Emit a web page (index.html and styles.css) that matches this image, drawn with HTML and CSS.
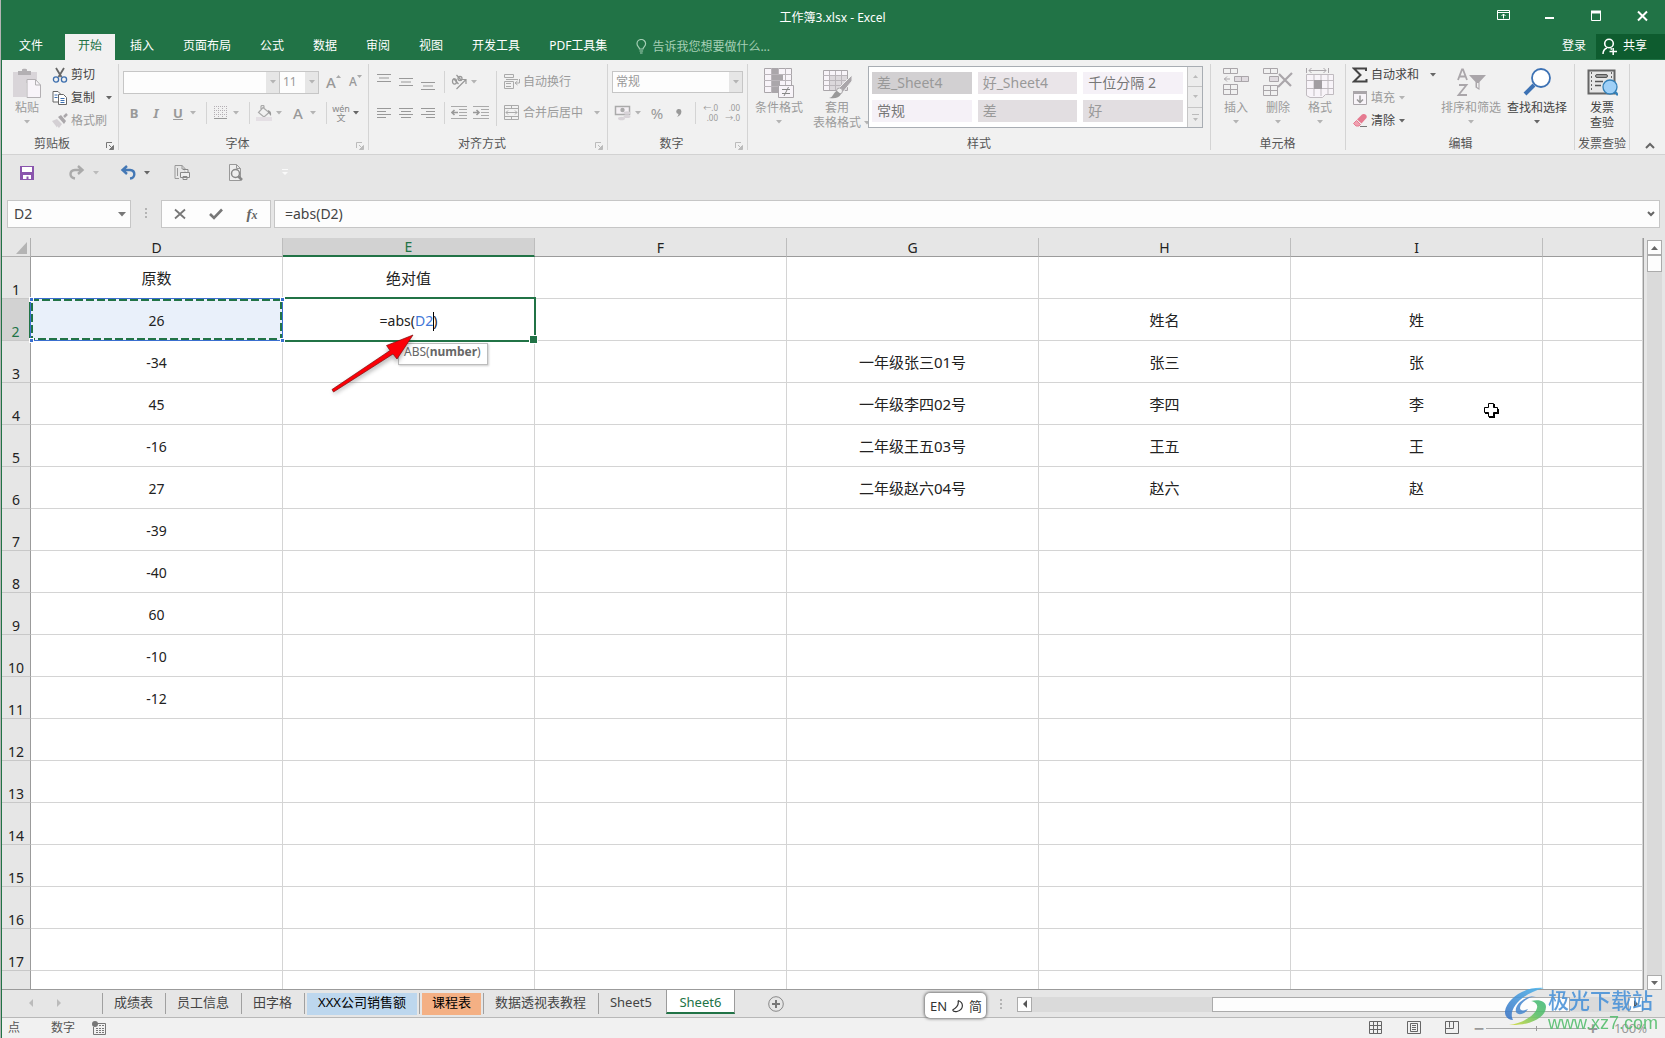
FILE: index.html
```html
<!DOCTYPE html>
<html lang="zh-CN">
<head>
<meta charset="utf-8">
<title>工作簿3.xlsx - Excel</title>
<link rel="stylesheet" href="styles.css">
</head>
<body>
<svg class="defs" aria-hidden="true">
  <symbol id="i-caret" viewBox="0 0 6 4"><path d="M0 0h6L3 3.4z" fill="currentColor"/></symbol>
  <symbol id="i-launch" viewBox="0 0 8 8"><path d="M.5 6V.5H6M3 3l3 3M7.500 3.500v4h-4z" fill="none" stroke="currentColor"/><path d="M7.500 3.500v4h-4z" fill="currentColor"/></symbol>
</svg>
<div class="app">
  <header class="titlebar">
    <h1 class="title">工作簿3.xlsx - Excel</h1>
    <div class="winbtns">
      <button aria-label="功能区显示选项"><svg width="14" height="12" viewBox="0 0 14 12"><path d="M.5.5h12v9H.5zM.5 2.500h12M6.500 8.500V4M4.500 6l2-2 2 2" fill="none" stroke="#fff"/></svg></button>
      <button aria-label="最小化"><svg width="10" height="12" viewBox="0 0 10 12"><path d="M0 8h9" stroke="#fff" stroke-width="2"/></svg></button>
      <button aria-label="最大化"><svg width="10" height="12" viewBox="0 0 10 12"><path d="M.5 1v9.500h9V1" fill="none" stroke="#fff"/><path d="M0 2h10" stroke="#fff" stroke-width="3"/></svg></button>
      <button aria-label="关闭"><svg width="11" height="12" viewBox="0 0 11 12"><path d="M1 1.500l9 9M10 1.500l-9 9" stroke="#fff" stroke-width="2"/></svg></button>
    </div>
  </header>
  <nav class="tabs">
    <button class="tab file">文件</button>
    <button class="tab active">开始</button>
    <button class="tab">插入</button>
    <button class="tab">页面布局</button>
    <button class="tab">公式</button>
    <button class="tab">数据</button>
    <button class="tab">审阅</button>
    <button class="tab">视图</button>
    <button class="tab">开发工具</button>
    <button class="tab">PDF工具集</button>
    <button class="tab tell"><svg width="11" height="15" viewBox="0 0 11 15"><path d="M3.500 10c0-2-2.500-2.500-2.500-5.200a4.300 4.300 0 0 1 8.600 0C9.600 7.500 7 8 7 10zM3.500 12h3.600M4 14h2.600" fill="none" stroke="#a5cfb5" stroke-width="1.200"/></svg>告诉我您想要做什么...</button>
    <button class="tab login">登录</button>
    <button class="tab share"><svg width="16" height="17" viewBox="0 0 16 17"><circle cx="7" cy="5.500" r="4.300" fill="none" stroke="#fff" stroke-width="1.600"/><path d="M1 16c0-3 1.500-5 4-6M8.500 10.500l1.500.8M7.500 13.500h7.500M11.200 10v7" fill="none" stroke="#fff" stroke-width="1.500"/></svg>共享</button>
  </nav>

  <div class="ribbon">
    <section class="group g-clip">
      <div class="body top">
        <button class="big off w50"><svg width="30" height="31" viewBox="0 0 30 31"><path d="M1 4h24v11H14v14H1z" fill="#d9d5d9"/><path d="M6 3h4V1.500C10 .5 15 .5 15 1.500V3h4v4H6z" fill="#b3b0b3"/><path d="M15 11.500h8.500L28.500 17v12.500H15z" fill="#f8f4f9" stroke="#b3b0b3"/><path d="M23.500 11.500V17h5" fill="none" stroke="#b3b0b3"/></svg><span>粘贴</span><svg class="caret"><use href="#i-caret"/></svg></button>
        <div class="stack">
          <button class="row"><svg width="16" height="16" viewBox="0 0 16 16"><path d="M4 1l5.500 9M12 1l-5.500 9" stroke="#666" stroke-width="1.800"/><circle cx="4" cy="12.500" r="2.600" fill="none" stroke="#3d6fae" stroke-width="1.300"/><circle cx="12" cy="12.500" r="2.600" fill="none" stroke="#3d6fae" stroke-width="1.300"/></svg>剪切</button>
          <button class="row"><svg width="16" height="16" viewBox="0 0 16 16"><path d="M1 1.500h5l2.500 2.500v8H1z" fill="#fff" stroke="#666"/><path d="M6.500 4.500h5L14.500 7.500v7h-8z" fill="#fff" stroke="#666"/><path d="M2.500 5h3M2.500 7.500h3M8.500 8.500h4M8.500 10.500h4M8.500 12.500h4" stroke="#3d6fae"/></svg>复制<svg class="caret far"><use href="#i-caret"/></svg></button>
          <button class="row off"><svg width="16" height="16" viewBox="0 0 16 16"><path d="M0 8l5-2 5 5-3 4-2-2v1.500z" fill="#d4d0d4"/><path d="M6 4l3-2 5 6-2 3z" fill="#aaa7aa"/><path d="M12 4l3-3" stroke="#aaa7aa" stroke-width="2.500"/></svg>格式刷</button>
        </div>
      </div>
      <footer><span>剪贴板</span><button class="launch dark" aria-label="剪贴板设置"><svg width="8" height="8"><use href="#i-launch"/></svg></button></footer>
    </section>

    <section class="group g-font">
      <div class="body rows">
        <div class="line">
          <div class="combo fontname"><input aria-label="字体名称"><button aria-label="展开字体"><svg class="caret"><use href="#i-caret"/></svg></button></div>
          <div class="combo fontsize"><input aria-label="字号" value="11"><button aria-label="展开字号"><svg class="caret"><use href="#i-caret"/></svg></button></div>
          <button class="ib grow" aria-label="增大字号"><span class="a15">A</span><svg width="5" height="3" viewBox="0 0 5 3"><path d="M0 3h5L2.500 0z" fill="#aaa"/></svg></button>
          <button class="ib grow" aria-label="减小字号"><span class="a12">A</span><svg width="5" height="3" viewBox="0 0 5 3"><path d="M0 0h5L2.500 3z" fill="#aaa"/></svg></button>
        </div>
        <div class="line">
          <button class="ib fmt"><b>B</b></button>
          <button class="ib fmt"><b class="it">I</b></button>
          <button class="ib split fmt"><b><u>U</u></b><svg class="caret"><use href="#i-caret"/></svg></button>
          <i class="vsep"></i>
          <button class="ib split" aria-label="边框"><svg width="14" height="14" viewBox="0 0 14 14"><path d="M.5 0v12M4.500 0v12M8.500 0v12M12.500 0v12M0 .5h13M0 4.500h13M0 8.500h13" stroke="#b5b0b5" stroke-dasharray="1 1"/><path d="M0 12.500h13" stroke="#999"/></svg><svg class="caret"><use href="#i-caret"/></svg></button>
          <i class="vsep"></i>
          <button class="ib split" aria-label="填充颜色"><svg width="16" height="16" viewBox="0 0 16 16"><path d="M7 2.500l6 5-5 4.500-5.500-4.500zM5 5V1.500c0-1.500 3-1.500 3 0V4" fill="none" stroke="#aaa" stroke-width="1.200"/><path d="M12 5c3 1 3.500 3 3 6-1.500-1-1.500-3-3-3z" fill="#999"/><path d="M0 12h16v4H0z" fill="#e4dfe4"/></svg><svg class="caret"><use href="#i-caret"/></svg></button>
          <button class="ib split" aria-label="字体颜色"><b class="a15">A</b><svg class="caret"><use href="#i-caret"/></svg></button>
          <i class="vsep"></i>
          <button class="ib split wen" aria-label="拼音指南"><span class="pinyin"><small>wén</small><small>文</small></span><svg class="caret dk"><use href="#i-caret"/></svg></button>
        </div>
      </div>
      <footer><span>字体</span><button class="launch" aria-label="字体设置"><svg width="8" height="8"><use href="#i-launch"/></svg></button></footer>
    </section>

    <section class="group g-align">
      <div class="body">
        <div class="rows aligns">
          <div class="line">
            <button class="ib" aria-label="顶端对齐"><svg width="14" height="16" viewBox="0 0 14 16"><path d="M0 .5h14M2 4h10M0 7.500h14" stroke="#999"/></svg></button>
            <button class="ib" aria-label="垂直居中"><svg width="14" height="16" viewBox="0 0 14 16"><path d="M0 4.500h14M2 8h10M0 11.500h14" stroke="#999"/></svg></button>
            <button class="ib" aria-label="底端对齐"><svg width="14" height="16" viewBox="0 0 14 16"><path d="M0 8.500h14M2 12h10M0 15.500h14" stroke="#999"/></svg></button>
            <i class="vsep"></i>
            <button class="ib split" aria-label="方向"><svg width="17" height="16" viewBox="0 0 17 16"><path d="M6 15L15 6M11 5.500h4.500V10" fill="none" stroke="#999" stroke-width="1.200"/><ellipse cx="4" cy="7.500" rx="2" ry="2.600" fill="none" stroke="#999" stroke-width="1.300"/><path d="M3 4.500L8 10M6 1l5 5.500" stroke="#999" stroke-width="1.300"/><circle cx="9.500" cy="4.500" r="2" fill="none" stroke="#999" stroke-width="1.300"/></svg><svg class="caret"><use href="#i-caret"/></svg></button>
          </div>
          <div class="line">
            <button class="ib" aria-label="左对齐"><svg width="14" height="11" viewBox="0 0 14 11"><path d="M0 .5h14M0 3.500h9M0 6.500h14M0 9.500h9" stroke="#999"/></svg></button>
            <button class="ib" aria-label="居中"><svg width="14" height="11" viewBox="0 0 14 11"><path d="M0 .5h14M2 3.500h10M0 6.500h14M2 9.500h10" stroke="#999"/></svg></button>
            <button class="ib" aria-label="右对齐"><svg width="14" height="11" viewBox="0 0 14 11"><path d="M0 .5h14M5 3.500h9M0 6.500h14M5 9.500h9" stroke="#999"/></svg></button>
            <i class="vsep"></i>
            <button class="ib" aria-label="减少缩进"><svg width="16" height="14" viewBox="0 0 16 14"><path d="M0 .5h16M8 3.500h8M8 6.500h8M8 9.500h8M0 12.500h16" stroke="#aaa"/><path d="M1 6.500h6M3.500 4L1 6.500 3.500 9" fill="none" stroke="#999" stroke-width="1.600"/></svg></button>
            <button class="ib" aria-label="增加缩进"><svg width="16" height="14" viewBox="0 0 16 14"><path d="M0 .5h16M8 3.500h8M8 6.500h8M8 9.500h8M0 12.500h16" stroke="#aaa"/><path d="M0 6.500h6M3.500 4L6 6.500 3.500 9" fill="none" stroke="#999" stroke-width="1.600"/></svg></button>
          </div>
        </div>
        <i class="vsep tall"></i>
        <div class="rows">
          <button class="row off"><svg width="16" height="16" viewBox="0 0 16 16"><path d="M.5.5h9v3h-9zM.5 7.500h9v7h-9zM2 9.500h5M2 12.500h5M2 5.500h12M15.500 5v4h-4M13.500 7l-2.500 2 2.500 2" fill="none" stroke="#aaa"/></svg>自动换行</button>
          <button class="row off"><svg width="16" height="16" viewBox="0 0 16 16"><path d="M.5.5h14v14H.5zM.5 3.500h14M.5 11.500h14M7.500 .5v3M7.500 11.500v3M2 7.500h11M4 5.500l-2 2 2 2M11 5.500l2 2-2 2" fill="none" stroke="#aaa"/></svg>合并后居中<svg class="caret far"><use href="#i-caret"/></svg></button>
        </div>
      </div>
      <footer><span>对齐方式</span><button class="launch" aria-label="对齐设置"><svg width="8" height="8"><use href="#i-launch"/></svg></button></footer>
    </section>

    <section class="group g-num">
      <div class="body rows">
        <div class="combo numfmt"><select aria-label="数字格式"><option>常规</option></select><span class="drop"><svg class="caret"><use href="#i-caret"/></svg></span></div>
        <div class="line">
          <button class="ib split" aria-label="会计数字格式"><svg width="17" height="16" viewBox="0 0 17 16"><path d="M1 1.500h14v8H1z" fill="#f4f0f4" stroke="#aaa" stroke-width="1.500"/><circle cx="8" cy="5" r="2.200" fill="#aaa"/><ellipse cx="12.500" cy="8" rx="3.500" ry="1.800" fill="#d8d3d8"/><ellipse cx="12.500" cy="11.500" rx="3.500" ry="1.600" fill="#d8d3d8"/><ellipse cx="7" cy="13.500" rx="3.500" ry="1.800" fill="#d8d3d8"/></svg><svg class="caret"><use href="#i-caret"/></svg></button>
          <button class="ib pct">%</button>
          <button class="ib" aria-label="千位分隔样式"><svg width="6" height="9" viewBox="0 0 6 9"><path d="M3 0a2.400 2.400 0 0 1 2.400 2.500C5.400 5 4 7 1 8c1-1 1.500-2 1.500-3A2.500 2.500 0 0 1 3 0z" fill="#999"/></svg></button>
          <i class="vsep"></i>
          <button class="ib dec" aria-label="增加小数位数"><span>←.0</span><span>.00</span></button>
          <button class="ib dec" aria-label="减少小数位数"><span>.00</span><span>→.0</span></button>
        </div>
      </div>
      <footer><span>数字</span><button class="launch" aria-label="数字设置"><svg width="8" height="8"><use href="#i-launch"/></svg></button></footer>
    </section>

    <section class="group g-style">
      <div class="body top">
        <button class="big off w58"><svg width="31" height="31" viewBox="0 0 31 31"><path d="M.5.5h27v24H.5z" fill="#f8f4f9" stroke="#aaa6aa"/><path d="M8 0h6v24H8zM8 6h11v6H8zM8 12h8v6H8z" fill="#aaa6aa"/><path d="M0 6.500h28M0 12.500h28M0 18.500h28M7.500 0v25M14.500 0v6M21.500 0v25" stroke="#bbb6bb"/><path d="M14.500 17.500h15v12h-15z" fill="#f8f4f9" stroke="#aaa6aa"/><path d="M18 21.500h8M18 25.500h8M24.500 19l-4.500 9" stroke="#888"/></svg><span>条件格式</span><svg class="caret"><use href="#i-caret"/></svg></button>
        <button class="big off w58"><svg width="31" height="31" viewBox="0 0 31 31"><path d="M1.500 2.500h24v20h-24z" fill="#f8f4f9" stroke="#aaa6aa"/><path d="M7 8h18v14H7z" fill="#dcd8dc"/><path d="M1 7.500h24M1 12.500h24M1 17.500h24M7.500 3v19M13.500 3v19M19.500 3v19" stroke="#bbb6bb"/><path d="M30 7L17 20l4 4 9-11z" fill="#aaa6aa" stroke="#f0f0f0"/><circle cx="17.500" cy="23" r="3" fill="#f0f0f0" stroke="#aaa6aa"/><path d="M7 30c5-1 4-6 8-7l4 3c-2 4-6 5-12 4z" fill="#999"/></svg><span>套用</span><span class="with">表格格式<svg class="caret"><use href="#i-caret"/></svg></span></button>
        <div class="gallery">
          <div class="swatches">
            <button class="sw s1">差_Sheet4</button><button class="sw s2">好_Sheet4</button><button class="sw s3">千位分隔 2</button>
            <button class="sw s4">常规</button><button class="sw s5">差</button><button class="sw s6">好</button>
          </div>
          <div class="gscroll">
            <button aria-label="上一行"><svg width="5" height="3" viewBox="0 0 5 3"><path d="M0 3h5L2.500 0z" fill="#bbb"/></svg></button>
            <button aria-label="下一行"><svg width="5" height="3" viewBox="0 0 5 3"><path d="M0 0h5L2.500 3z" fill="#bbb"/></svg></button>
            <button aria-label="更多样式"><svg width="7" height="7" viewBox="0 0 7 7"><path d="M0 0h7v1H0zM1 4h5L3.500 7z" fill="#bbb"/></svg></button>
          </div>
        </div>
      </div>
      <footer><span>样式</span></footer>
    </section>

    <section class="group g-cell">
      <div class="body top">
        <button class="big off w42"><svg width="27" height="31" viewBox="0 0 27 31"><path d="M.5.5h14v5H.5zM7.500.5v5M.5 16.500h14v10H.5zM7.500 16.500v10M.5 21.500h14M1 11h6M4 8.500L1.500 11 4 13.500" fill="none" stroke="#aaa6aa"/><path d="M11.500 8.500h14v5h-14zM18.500 8.500v5" fill="#e0dbe0" stroke="#aaa6aa"/></svg><span>插入</span><svg class="caret"><use href="#i-caret"/></svg></button>
        <button class="big off w42"><svg width="30" height="31" viewBox="0 0 30 31"><path d="M.5.5h14v5H.5zM7.500.5v5M.5 17.500h14v10H.5zM7.500 17.500v10M.5 22.500h14" fill="none" stroke="#aaa6aa"/><path d="M6.500 8.500h9v5h-9z" fill="#e0dbe0" stroke="#aaa6aa"/><path d="M16 6l12 12M29 5L15 19" stroke="#aaa6aa" stroke-width="2.200"/></svg><span>删除</span><svg class="caret"><use href="#i-caret"/></svg></button>
        <button class="big off w42"><svg width="29" height="31" viewBox="0 -1 29 31"><path d="M.5 5.500h27v20h-8l-3 3H4l-3.500-2z" fill="#f8f4f9" stroke="#c0bbc0"/><path d="M8 5v22M15 5v22M22 5v21M1 11.500h26M1 19.500h26" stroke="#c0bbc0"/><path d="M8 11h8v9H8z" fill="#a29ea2"/><path d="M.5-1v5M22.500-1v5M3 1.500h17M5.500-1L3 1.500 5.500 4M17.500-1L20 1.500 17.500 4" fill="none" stroke="#aaa6aa"/></svg><span>格式</span><svg class="caret"><use href="#i-caret"/></svg></button>
      </div>
      <footer><span>单元格</span></footer>
    </section>

    <section class="group g-edit">
      <div class="body top">
        <div class="stack">
          <button class="row"><svg width="16" height="16" viewBox="0 0 16 16"><path d="M14 4V1.500H2L8.500 8 2 14.500h12.500V12" fill="none" stroke="#444" stroke-width="2"/></svg>自动求和<svg class="caret far"><use href="#i-caret"/></svg></button>
          <button class="row off"><svg width="16" height="16" viewBox="0 0 16 16"><path d="M1.500 1.500h13v13h-13z" fill="#f8f4f9" stroke="#aaa6aa"/><path d="M1 1h14v3H1z" fill="#aaa6aa"/><path d="M8 5.500v7M5 9.500l3 3 3-3" fill="none" stroke="#999" stroke-width="1.500"/></svg>填充<svg class="caret"><use href="#i-caret"/></svg></button>
          <button class="row"><svg width="16" height="16" viewBox="0 0 16 16"><path d="M5 6.500l5-5c1-1 3-.5 4 .5s1 2.500 0 3.500l-4.500 5z" fill="#e57a90"/><path d="M4.500 7.500l4 4-1.500 1.500H4l-2.500-2.500z" fill="#f0a0b0" stroke="#e57a90"/><path d="M8 13.500h7" stroke="#777"/></svg>清除<svg class="caret"><use href="#i-caret"/></svg></button>
        </div>
        <button class="big off sortbtn"><svg width="31" height="31" viewBox="0 0 31 31"><path d="M2 12L6 1.500h1L11 12M3.500 8.500h6M3 17h7.500L2.500 27H11" fill="none" stroke="#aaa6aa" stroke-width="1.800"/><path d="M13 7h17l-6.500 7v8l-4-2.500V14z" fill="#aaa6aa"/><path d="M21 15h1.500v5L21 19z" fill="#f0f0f0"/></svg><span>排序和筛选</span><svg class="caret"><use href="#i-caret"/></svg></button>
        <button class="big w66"><svg width="31" height="31" viewBox="0 0 31 31"><path d="M3 26l9-9" stroke="#3d72b4" stroke-width="4"/><circle cx="19" cy="10" r="9" fill="#fff" stroke="#3d72b4" stroke-width="1.800"/></svg><span>查找和选择</span><svg class="caret"><use href="#i-caret"/></svg></button>
      </div>
      <footer><span>编辑</span></footer>
    </section>

    <section class="group g-inv">
      <div class="body top">
        <button class="big w54"><svg width="31" height="31" viewBox="0 0 31 31"><path d="M1.500 2.500h26v23h-26z" fill="#e6e6e6" stroke="#666" stroke-width="2"/><path d="M4.500 4v20M24.500 4v9" stroke="#666" stroke-dasharray="2 2"/><rect x="8.500" y="6.500" width="12" height="3" rx="1.500" fill="#999" stroke="#555"/><path d="M8 13.500h8M8 17.500h6" stroke="#555" stroke-width="1.300"/><path d="M27 23l4 4" stroke="#3480b8" stroke-width="2.500"/><circle cx="23" cy="19" r="7" fill="#9fd0f7" stroke="#3480b8" stroke-width="1.300"/></svg><span>发票</span><span>查验</span></button>
      </div>
      <footer><span>发票查验</span></footer>
    </section>
    <button class="collapse" aria-label="折叠功能区"><svg width="10" height="7" viewBox="0 0 10 7"><path d="M1 6l4-4 4 4" fill="none" stroke="#666" stroke-width="2"/></svg></button>
  </div>

  <div class="qat">
    <button aria-label="保存"><svg width="16" height="16" viewBox="0 0 16 16"><path d="M1 1h14v14H1z" fill="#8a55ad"/><path d="M3 2h10v5H3zM4 10h8v4H9.500v-2.500h-2V14H4z" fill="#fff"/></svg></button>
    <button class="mid" aria-label="恢复"><svg width="16" height="16" viewBox="0 0 16 16"><path d="M13 5H6C0 5.500 0 12.500 6 13.500M9 1l4.500 4L9 9" fill="none" stroke="#aaa" stroke-width="2.400"/></svg><svg class="caret"><use href="#i-caret"/></svg></button>
    <button class="mid undo" aria-label="撤消"><svg width="16" height="16" viewBox="0 0 16 16"><path d="M3 5h7c6 .5 5.500 8 0 8.500M7 1L2.500 5 7 9" fill="none" stroke="#4478b5" stroke-width="2.400"/></svg><svg class="caret dk"><use href="#i-caret"/></svg></button>
    <button class="print" aria-label="快速打印"><svg width="17" height="17" viewBox="0 0 17 17"><path d="M1 1.500h7l3 3v3M1 1.500v13h4M3.500 4v8M8 1v4h3" fill="none" stroke="#999"/><path d="M6.500 8.500h9v5h-9zM9 5.500h5v3M9 12.500h4v3H9z" fill="#eee" stroke="#888"/></svg></button>
    <button class="prev" aria-label="打印预览"><svg width="16" height="17" viewBox="0 0 16 17"><path d="M1.500.5h7l4 4v12h-11zM8.500.5v4h4" fill="#eee" stroke="#999"/><circle cx="7.500" cy="9.500" r="4" fill="#eee" stroke="#888" stroke-width="1.500"/><path d="M10 12l4 4" stroke="#888" stroke-width="2.500"/></svg></button>
    <button aria-label="自定义快速访问工具栏"><svg width="6" height="7" viewBox="0 0 6 7"><path d="M0 0h6v1H0zM0 3h6L3 6z" fill="#fafafa"/></svg></button>
  </div>

  <div class="fbar">
    <div class="namebox"><input aria-label="名称框" value="D2"><button aria-label="展开名称框"><svg width="8" height="5" viewBox="0 0 8 5"><path d="M0 0h8L4 4.500z" fill="#777"/></svg></button></div>
    <span class="grip"></span>
    <div class="fbtns">
      <button aria-label="取消"><svg width="12" height="12" viewBox="0 0 12 12"><path d="M1 1.500l10 9M11 1.500l-10 9" stroke="#777" stroke-width="1.800"/></svg></button>
      <button aria-label="输入"><svg width="14" height="12" viewBox="0 0 14 12"><path d="M1 6l4 4 8-8.500" fill="none" stroke="#777" stroke-width="2.600"/></svg></button>
      <button class="fx" aria-label="插入函数"><i>f<small>x</small></i></button>
    </div>
    <div class="formula"><input aria-label="编辑栏" value="=abs(D2)"><button aria-label="展开编辑栏"><svg width="8" height="6" viewBox="0 0 8 6"><path d="M1 1l3 3 3-3" fill="none" stroke="#666" stroke-width="2"/></svg></button></div>
  </div>

  <main class="sheet">
    <div class="gridwrap">
      <table class="grid">
        <colgroup><col class="c0"><col class="c"><col class="c"><col class="c"><col class="c"><col class="c"><col class="c"><col></colgroup>
        <thead><tr><th class="corner"><svg width="11" height="12" viewBox="0 0 11 12"><path d="M11 0v12H0z" fill="#b4b4b4"/></svg></th><th>D</th><th class="on">E</th><th>F</th><th>G</th><th>H</th><th>I</th><th></th></tr></thead>
        <tbody>
          <tr><th>1</th><td>原数</td><td>绝对值</td><td></td><td></td><td></td><td></td><td></td></tr>
          <tr><th class="on">2</th><td class="ref num">26<svg class="ants" aria-hidden="true"><rect width="100%" height="100%"/></svg><i class="h tl"></i><i class="h tr"></i><i class="h bl"></i><i class="h br"></i></td><td class="edit num">=abs(<span class="arg">D2</span><i class="cursor"></i>)<i class="frame"></i><span class="tip">ABS(<b>number</b>)</span>
            <svg class="arrow" viewBox="0 0 90 66" aria-hidden="true"><g class="shade"><path d="M4 57.500L60 20l-3-4.500L85 4 68 29l-4-5L5.500 60z" fill="#333"/></g><path d="M3 55.500L61 16.500l-3.500-5L84 1 68 25l-4-5L4.500 58z" fill="#fb0007" stroke="#7d1010" stroke-width=".7"/></svg></td><td></td><td></td><td>姓名</td><td>姓</td><td></td></tr>
          <tr><th>3</th><td class="num">-34</td><td></td><td></td><td>一年级张三01号</td><td>张三</td><td>张</td><td></td></tr>
          <tr><th>4</th><td class="num">45</td><td></td><td></td><td>一年级李四02号</td><td>李四</td><td class="host">李<svg class="pointer" width="16" height="16" viewBox="0 0 16 16"><path d="M6 2h6v5h4v5h-4v4H6v-4H2V7h4z" fill="#000"/><path d="M5.500 1.500h5v4h4v5h-4v4h-5v-4h-4v-5h4z" fill="#fff" stroke="#000"/></svg></td><td></td></tr>
          <tr><th>5</th><td class="num">-16</td><td></td><td></td><td>二年级王五03号</td><td>王五</td><td>王</td><td></td></tr>
          <tr><th>6</th><td class="num">27</td><td></td><td></td><td>二年级赵六04号</td><td>赵六</td><td>赵</td><td></td></tr>
          <tr><th>7</th><td class="num">-39</td><td></td><td></td><td></td><td></td><td></td><td></td></tr>
          <tr><th>8</th><td class="num">-40</td><td></td><td></td><td></td><td></td><td></td><td></td></tr>
          <tr><th>9</th><td class="num">60</td><td></td><td></td><td></td><td></td><td></td><td></td></tr>
          <tr><th>10</th><td class="num">-10</td><td></td><td></td><td></td><td></td><td></td><td></td></tr>
          <tr><th>11</th><td class="num">-12</td><td></td><td></td><td></td><td></td><td></td><td></td></tr>
          <tr><th>12</th><td></td><td></td><td></td><td></td><td></td><td></td><td></td></tr>
          <tr><th>13</th><td></td><td></td><td></td><td></td><td></td><td></td><td></td></tr>
          <tr><th>14</th><td></td><td></td><td></td><td></td><td></td><td></td><td></td></tr>
          <tr><th>15</th><td></td><td></td><td></td><td></td><td></td><td></td><td></td></tr>
          <tr><th>16</th><td></td><td></td><td></td><td></td><td></td><td></td><td></td></tr>
          <tr><th>17</th><td></td><td></td><td></td><td></td><td></td><td></td><td></td></tr>
          <tr><th></th><td></td><td></td><td></td><td></td><td></td><td></td><td></td></tr>
        </tbody>
      </table>
    </div>
    <div class="vscroll">
      <button aria-label="向上滚动"><svg width="7" height="4" viewBox="0 0 7 4"><path d="M0 4h7L3.500 0z" fill="#666"/></svg></button>
      <span class="vthumb"></span><span class="vtrack"></span>
      <button aria-label="向下滚动"><svg width="7" height="4" viewBox="0 0 7 4"><path d="M0 0h7L3.500 4z" fill="#666"/></svg></button>
    </div>
  </main>

  <div class="sheetbar">
    <div class="nav"><button aria-label="上一个工作表"><svg width="4" height="8" viewBox="0 0 4 8"><path d="M4 0v8L0 4z" fill="#bbb"/></svg></button><button aria-label="下一个工作表"><svg width="4" height="8" viewBox="0 0 4 8"><path d="M0 0v8l4-4z" fill="#bbb"/></svg></button></div>
    <div class="stabs">
      <button class="st"><span>成绩表</span></button><button class="st"><span>员工信息</span></button><button class="st"><span>田字格</span></button><button class="st tint blue"><span>XXX公司销售额</span></button><button class="st tint orange"><span>课程表</span></button><button class="st"><span>数据透视表教程</span></button><button class="st last"><span>Sheet5</span></button><button class="st cur"><span>Sheet6</span></button>
    </div>
    <button class="add" aria-label="新建工作表"><svg width="16" height="16" viewBox="0 0 16 16"><circle cx="8" cy="8" r="7.300" fill="none" stroke="#888"/><path d="M4 8h8M8 4v8" stroke="#777" stroke-width="2"/></svg></button>
    <div class="hscroll">
      <span class="grip"></span>
      <button aria-label="向左滚动"><svg width="4" height="8" viewBox="0 0 4 8"><path d="M4 0v8L0 4z" fill="#555"/></svg></button>
      <span class="track"><span class="thumb"></span></span>
      <button aria-label="向右滚动"><svg width="4" height="8" viewBox="0 0 4 8"><path d="M0 0v8l4-4z" fill="#555"/></svg></button>
    </div>
    <div class="ime">EN<svg width="12" height="14" viewBox="0 0 12 14"><path d="M6 1.500c6 2 6 9-1 11-2 .5-4-.5-4.500-1.500M6 1.500c1 3.500-1 7-5.500 9.500" fill="none" stroke="#333" stroke-width="1.200"/></svg>简</div>
  </div>

  <footer class="status">
    <span>点</span><span class="mode">数字</span>
    <svg width="14" height="14" viewBox="0 0 14 14"><path d="M5 2.500h8.500v11h-12V6" fill="none" stroke="#777"/><circle cx="3" cy="3" r="3" fill="#777"/><path d="M7 4.500h5M4 7.500h8M4 9.500h8M4 11.500h8" stroke="#777" stroke-dasharray="2 1"/></svg>
    <div class="views">
      <button aria-label="普通"><svg width="14" height="14" viewBox="0 0 14 14"><path d="M.5.5h12v12H.5zM.5 4.500h12M.5 8.500h12M4.500.5v12M8.500.5v12" fill="none" stroke="#666"/></svg></button>
      <button aria-label="页面布局"><svg width="14" height="14" viewBox="0 0 14 14"><path d="M.5.5h13v12H.5zM3.500 2.500h7v8h-7zM5 4.500h4M5 6.500h4M5 8.500h4" fill="none" stroke="#666"/></svg></button>
      <button aria-label="分页预览"><svg width="14" height="14" viewBox="0 0 14 14"><path d="M.5.5h13v12H.5zM4.500.5v6M.5 7.500h8V.5" fill="none" stroke="#666"/></svg></button>
    </div>
    <div class="zoom"><button aria-label="缩小">−</button><input type="range" aria-label="缩放" min="0" max="100" value="50"><button aria-label="放大">+</button><span class="pc">100%</span></div>
  </footer>
</div>
<div class="brand">
  <svg width="44" height="40" viewBox="0 0 44 40"><defs><linearGradient id="bg1" x1="0" y1="1" x2="1" y2="0"><stop offset="0" stop-color="#3a72c4"/><stop offset="1" stop-color="#4fb8ef"/></linearGradient><linearGradient id="bg2" x1="0" y1="1" x2="1" y2="0"><stop offset="0" stop-color="#d9dc3a"/><stop offset=".6" stop-color="#58c06a"/><stop offset="1" stop-color="#3fb878"/></linearGradient></defs><path d="M40 1C20-1 3 12 1 24c-.5 5 3 9 8 9C4 24 14 8 40 1z" fill="url(#bg1)"/><path d="M32 9C20 9 10 18 12 25c2 4 9 2 12-3-4 2-8 2-8-1 0-5 8-11 16-12z" fill="#4a8ad0"/><path d="M27 14c8-2 15 0 15 6C42 31 25 39 5 38c13-2 26-9 28-17 1-4-2-6-6-7z" fill="url(#bg2)"/></svg>
  <div><strong>极光下载站</strong><span>www.xz7.com</span></div>
</div>
</body>
</html>
```
FILE: styles.css
```css
* { box-sizing: border-box; }
html, body { height: 100%; }
body {
  margin: 0;
  overflow: hidden;
  background: #b4b4b4;
  color: #444;
  font: 12px/16px "Noto Sans", "Noto Sans CJK SC", sans-serif;
}
button, input, select { font: inherit; color: inherit; border: 0; padding: 0; margin: 0; background: none; }
button { display: flex; align-items: center; justify-content: center; }
svg { display: block; flex: none; }
.defs { position: absolute; width: 0; height: 0; }
.caret { width: 6px; height: 4px; color: #666; }
.app { display: flex; flex-direction: column; height: 100vh; margin-left: 1px; border-left: 1px solid #217346; background: #e6e6e6; }

/* title and tabs */
.titlebar { display: flex; height: 34px; background: #217346; color: #fff; }
.title { flex: 1; margin: 0; padding-left: 182px; font-size: 12px; font-weight: 400; line-height: 36px; text-align: center; }
.winbtns { display: flex; }
.winbtns button { width: 46px; height: 32px; }
.tabs { display: flex; gap: 1px; height: 26px; background: #217346; color: #fff; }
.tab { padding: 0 14px; height: 26px; white-space: nowrap; line-height: 24px; align-items: flex-start; }
.tab.file { width: 62px; padding: 0 20px 0 16px; }
.tab.active { background: #f1f1f1; color: #217346; padding: 0 13px; }
.tab.tell { color: #a5cfb5; gap: 5px; line-height: 26px; }
.tab.tell svg { margin-top: 5px; }
.tab.login { margin-left: auto; padding: 0 9px; }
.tab.share { width: 69px; height: 25px; padding: 0 18px 0 6px; gap: 5px; background: #0e5c2f; line-height: 23px; }
.tab.share svg { margin-top: 4px; }

/* ribbon */
.ribbon { display: flex; height: 95px; padding: 4px 0; background: #f1f1f1; border-bottom: 1px solid #d2d2d2; }
.group { display: flex; flex-direction: column; flex: none; border-right: 1px solid #d4d4d4; }
.g-clip { width: 117px; }
.g-font { width: 250px; padding-left: 4px; }
.g-align { width: 239px; padding-left: 4px; }
.g-num { width: 140px; padding-left: 4px; }
.g-style { width: 463px; }
.g-cell { width: 135px; padding-left: 4px; }
.g-edit { width: 229px; padding-left: 6px; }
.g-inv { width: 55px; }
.body { display: flex; flex: 1; }
.group > footer { display: flex; height: 15px; margin-bottom: -2px; color: #555; }
.group > footer span { flex: 1; text-align: center; line-height: 14px; }
.g-edit > footer, .g-cell > footer { padding-right: 5px; }
.launch { width: 16px; height: 18px; color: #bbb; }
.launch.dark { color: #777; }
.rows { display: flex; flex-direction: column; gap: 9px; padding-top: 7px; }
.line { display: flex; height: 22px; align-items: center; }
.ib { width: 22px; height: 22px; flex: none; color: #999; }
.split { width: 34px; gap: 3px; padding-left: 2px; justify-content: flex-start; }
.split > :first-child { min-width: 18px; text-align: center; }
.split .caret, .off .caret, .combo .caret { color: #b4b4b4; }
.split .dk, .qat .dk { color: #666; }
.fmt, .fmt b { font-family: "Noto Sans", sans-serif; font-size: 13px; }
.it { font-style: italic; }
.a15, .a12 { font-family: "Noto Sans", sans-serif; font-size: 15px; line-height: 18px; font-weight: 500; }
.a12 { font-size: 12px; }
.grow { align-items: center; gap: 0; padding-left: 3px; }
.grow svg { margin-bottom: 12px; }
.vsep { width: 1px; height: 22px; margin: 0 3px 0 5px; background: #d4d4d4; flex: none; }
.vsep.tall { height: 55px; margin: 7px 7px 0 4px; }
.aligns { width: 119px; }
.pinyin { display: flex; flex-direction: column; align-items: center; }
.pinyin small { font-size: 9px; line-height: 9px; color: #888; }
.wen { gap: 3px; }
.combo { display: flex; height: 23px; border: 1px solid #c6c6c6; background: #fdfdfd; color: #999; }
.combo input, .combo select { flex: 1; min-width: 0; width: 100%; padding-left: 3px; appearance: none; }
.combo button, .combo .drop { display: flex; align-items: center; justify-content: center; width: 13px; background: #e6e6e6; }
.fontname { width: 157px; }
.fontsize { width: 40px; margin: 0 2px 0 -1px; }
.numfmt { width: 131px; height: 22px; }
.pct { font-size: 15px; }
.dec { flex-direction: column; align-items: flex-end; padding-right: 3px; font-size: 8px; line-height: 10px; }
.row { height: 23px; gap: 3px; justify-content: flex-start; white-space: nowrap; }
.rows > .row { height: 22px; }
.row .caret { margin-left: 1px; }
.row .caret.far { margin-left: 8px; }
.off { color: #9b9b9b; }
.body.top { align-items: flex-start; }
.stack { margin-top: -1px; }
.big { flex-direction: column; justify-content: flex-start; padding-top: 4px; height: 66px; line-height: 15px; white-space: nowrap; flex: none; }
.big > svg:first-child { margin-bottom: 1px; }
.big > .caret { margin-top: 5px; }
.w42 { width: 42px; }
.w50 { width: 50px; }
.w54 { width: 54px; }
.w58 { width: 58px; }
.w66 { width: 66px; }
.sortbtn { width: 66px; margin-left: auto; }
.g-edit .w66 { margin-right: 4px; }
.with { display: flex; align-items: center; gap: 3px; margin-right: -9px; }
.gallery { display: flex; width: 335px; height: 62px; margin: 2px 0 0 auto; border: 1px solid #a8adb3; background: #fff; }
.g-style .body { padding: 0 7px 0 2px; }
.swatches { display: grid; grid-template-columns: repeat(3, 1fr); gap: 6px; flex: 1; padding: 5px 4px 5px 3px; }
.sw { justify-content: flex-start; padding-left: 5px; font-size: 14px; line-height: 22px; color: #999; white-space: nowrap; }
.s1 { background: #d2d0d2; }
.s2 { background: #eae5e9; }
.s3, .s4 { background: #f5f1f7; color: #777; }
.s5, .s6 { background: #e2dee1; }
.gscroll { display: flex; flex-direction: column; width: 15px; border-left: 1px solid #c6c6c6; background: #ececec; }
.gscroll button { flex: 1; border-top: 1px solid #c6c6c6; }
.gscroll button:first-child { border-top: 0; }
.collapse { align-self: flex-end; margin: 0 auto; padding-left: 4px; width: 28px; height: 10px; }

/* quick access */
.qat { display: flex; align-items: center; height: 35px; padding-left: 17px; }
.qat button { height: 20px; margin-right: 34px; }
.qat .mid { gap: 8px; margin-right: 21px; }
.qat .mid .caret { color: #bbb; }
.qat .mid .dk { color: #666; }
.qat .undo { margin-right: 24px; }
.qat .print { margin-right: 37px; }
.qat .prev { margin-right: 38px; }

/* formula bar */
.fbar { display: flex; height: 48px; padding: 10px 5px; color: #444; }
.namebox, .fbtns, .formula { display: flex; border: 1px solid #c6c6c6; background: #fdfdfd; }
.namebox { width: 124px; }
.namebox input, .formula input { flex: 1; min-width: 0; padding-left: 6px; font-size: 14px; }
.namebox button, .formula button { width: 17px; }
.fbar .grip { margin: 8px 14px; }
.grip { width: 2px; height: 11px; background: repeating-linear-gradient(#b4b4b4 0 2px, transparent 2px 4px); }
.fbtns { width: 110px; margin-right: 3px; }
.fbtns button { flex: 1; }
.fx { font: 700 15px "Liberation Serif", serif; color: #666; }
.fx small { font-size: 12px; }
.formula { flex: 1; }
.formula input { padding-left: 10px; }

/* grid */
.sheet { display: flex; flex: 1; min-height: 0; }
.gridwrap { flex: 1; overflow: hidden; border-right: 1px solid #9b9b9b; border-bottom: 1px solid #9b9b9b; }
.grid { width: 100%; border-collapse: separate; border-spacing: 0; table-layout: fixed; color: #222; background: #fff; font-size: 15px; }
.c0 { width: 29px; }
.c { width: 252px; }
.grid th { padding: 0; font-weight: 400; font-size: 14px; line-height: 16px; background: #e6e6e6; }
.grid thead th { height: 19px; padding-top: 2px; border-bottom: 1px solid #9b9b9b; border-right: 1px solid #bdbdbd; }
.grid thead th.on { background: #d2d2d2; color: #217346; border-bottom: 2px solid #217346; padding-top: 1px; }
.grid .corner { border-color: #b0b0b0; }
.corner svg { margin-left: 14px; }
tbody th { vertical-align: bottom; border-right: 1px solid #9b9b9b; border-bottom: 1px solid #c8c8c8; }
.grid tbody th.on { background: #d2d2d2; color: #217346; border-right: 2px solid #217346; }
.grid td { height: 42px; padding: 1px 0 0; text-align: center; line-height: 20px; border-right: 1px solid #d4d4d4; border-bottom: 1px solid #d4d4d4; }
.grid td.num { font-size: 14px; padding-top: 3px; }
.grid td.ref, .grid td.edit, .grid td.host { position: relative; }
.ref { background: #e9f0fa; }
.ants { position: absolute; left: -1px; top: -1px; width: 253px; height: 43px; overflow: hidden; border: 1px solid #3a6fd0; background: transparent; }
.ants rect { fill: none; stroke: #217346; stroke-width: 4; stroke-dasharray: 8 3; }
.h { position: absolute; width: 5px; height: 5px; background: #3a6fd0; border: 1px solid #fff; }
.tl { left: -2px; top: -2px; }
.tr { right: -3px; top: -2px; z-index: 2; }
.bl { left: -2px; bottom: -3px; }
.br { right: -3px; bottom: -3px; z-index: 2; }
.arg { color: #3f78d8; }
.cursor { display: inline-block; width: 1px; height: 19px; margin-right: -1px; vertical-align: middle; background: #000; }
.frame { position: absolute; inset: -2px -2px -2px 0; border: 2px solid #217346; border-left-width: 0; }
.frame::after { content: ""; position: absolute; right: -4px; bottom: -4px; width: 7px; height: 7px; background: #217346; border: 1px solid #fff; }
.tip { position: absolute; left: 115px; top: 44px; height: 22px; padding: 0 6px 0 5px; border: 1px solid #bdbdbd; background: #fff; color: #666; font-size: 12px; line-height: 16px; box-shadow: 1px 1px 2px #ccc; }
.arrow { position: absolute; left: 46px; top: 35px; width: 90px; height: 66px; z-index: 3; overflow: visible; }
.shade { opacity: .35; filter: blur(2px); }
.pointer { position: absolute; left: 192px; top: 19px; }
.vscroll { display: flex; flex-direction: column; width: 21px; padding: 2px 3px 0 3px; }
.vscroll button, .vthumb { height: 15px; background: #fdfdfd; border: 1px solid #ababab; }
.vthumb { height: 17px; }
.vtrack { flex: 1; background: #dadada; }

/* sheet tabs */
.sheetbar { position: relative; display: flex; height: 28px; border-bottom: 1px solid #b8b8b8; }
.nav { display: flex; width: 100px; padding-left: 18px; }
.nav button { width: 22px; height: 26px; margin-right: 6px; }
.stabs { display: flex; height: 24px; font-size: 13px; line-height: 21px; }
.st { padding: 3px 2px 0; }
.st::before { content: ""; align-self: flex-start; width: 1px; height: 21px; margin-left: -2px; background: #a0a0a0; }
.st span { display: block; height: 22px; padding: 0 10px 0 9px; margin-left: 2px; line-height: 19px; }
.st.tint { color: #000; }
.st.tint span { padding: 0 10px; }
.st.blue span { padding: 0 11px; background: #bdd7ee; }
.orange span { background: #f4b084; }
.st.last { padding-right: 4px; }
.st.cur { padding: 0; width: 69px; background: #fff; color: #217346; border: 1px solid #9b9b9b; border-width: 0 1px; border-bottom: 2px solid #217346; }
.st.cur::before { display: none; }
.st.cur span { margin: 0; padding: 0; line-height: 24px; }
.add { width: 22px; margin: 0 0 0 30px; height: 28px; }
.hscroll { display: flex; align-items: center; flex: 1; max-width: 643px; margin: 0 22px 0 auto; height: 28px; }
.hscroll button { width: 15px; height: 15px; background: #fdfdfd; border: 1px solid #ababab; flex: none; }
.hscroll .grip { margin-right: 15px; }
.track { flex: 1; height: 15px; background: #dadada; padding-left: 28%; }
.thumb { display: block; width: 86%; height: 15px; background: #fdfdfd; border: 1px solid #ababab; }
.ime { position: absolute; left: 923px; top: 3px; z-index: 2; display: flex; align-items: center; gap: 5px; width: 61px; height: 25px; padding-left: 5px; border-radius: 5px; background: #fff; color: #333; font-size: 13px; box-shadow: 0 0 3px 1px #777; }

/* status bar */
.status { display: flex; align-items: center; height: 20px; padding-left: 6px; background: #f1f1f1; color: #555; }
.mode { margin: 0 17px 0 31px; }
.views { display: flex; gap: 24px; margin-left: auto; }
.zoom { display: flex; align-items: center; margin-left: 13px; padding-right: 15px; color: #999; }
.zoom button { width: 14px; font-size: 18px; line-height: 18px; font-weight: 700; }
.zoom input { appearance: none; width: 100px; height: 12px; background: linear-gradient(#aaa, #aaa) center / 100% 1px no-repeat; }
.zoom input::-webkit-slider-thumb { appearance: none; width: 1px; height: 5px; background: #999; }
.pc { width: 50px; padding-left: 14px; font-size: 13px; }
.brand { position: absolute; right: 7px; bottom: 4px; z-index: 5; display: flex; opacity: .88; }
.brand div { display: flex; flex-direction: column; }
.brand strong { font: 500 21px/25px "Noto Sans CJK SC", sans-serif; color: #4791d8; }
.brand span { font: 18px/22px "Liberation Sans", sans-serif; color: #52bd6b; }
```
